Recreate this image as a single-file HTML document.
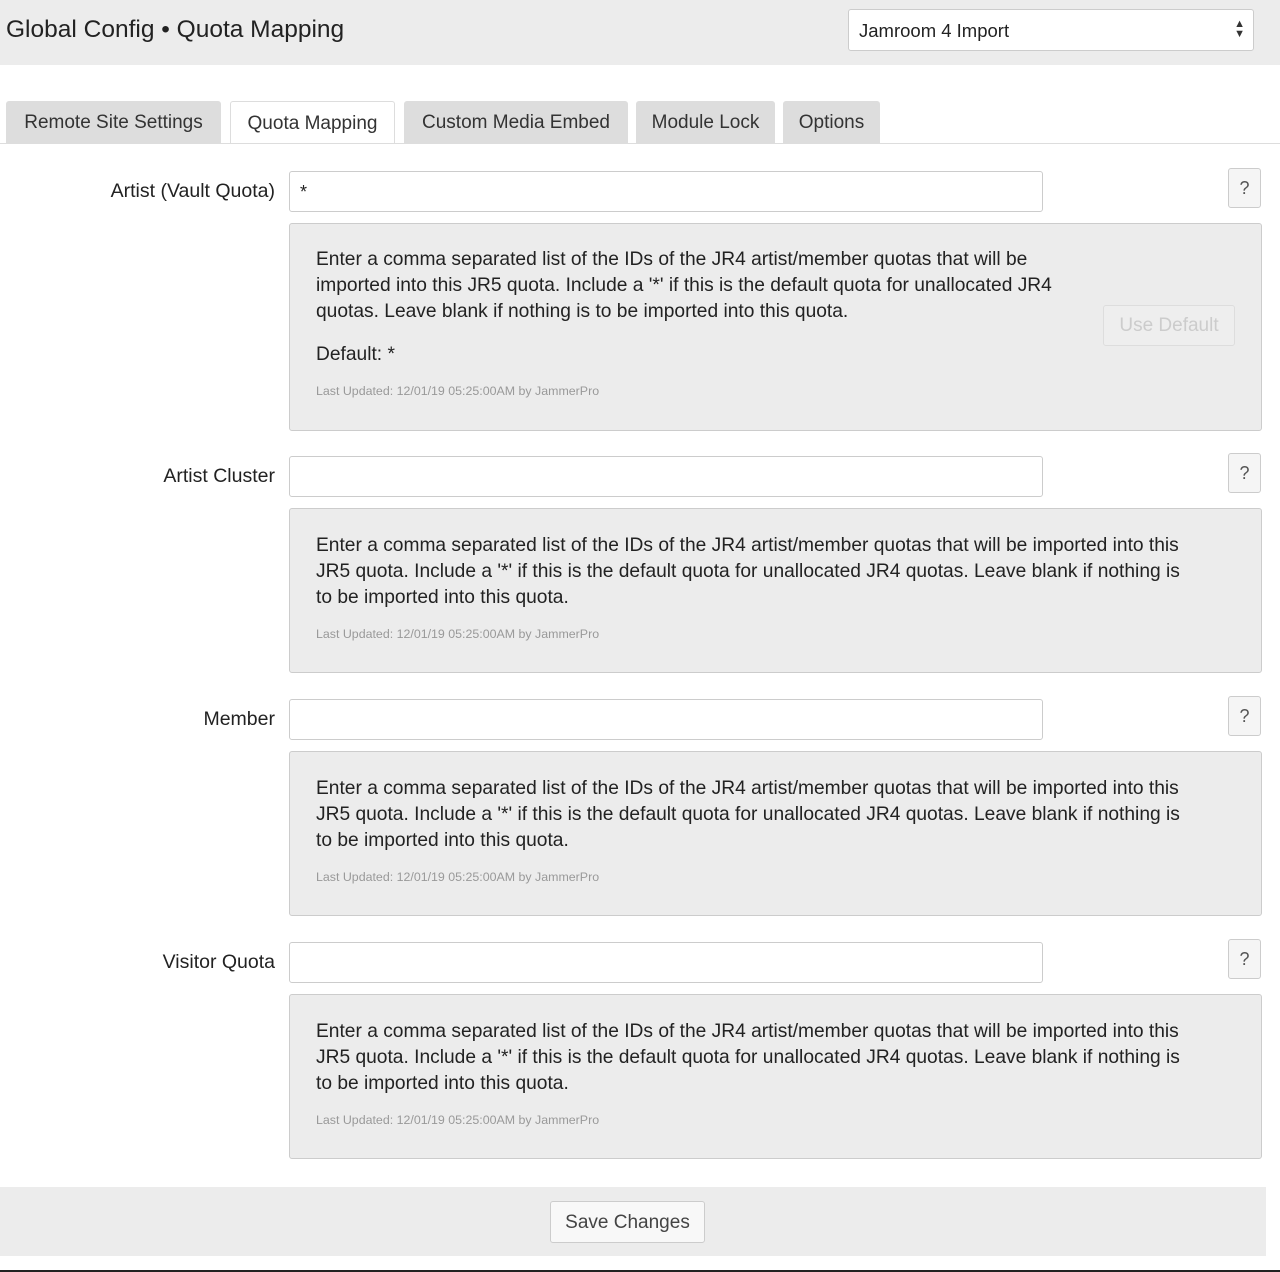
<!DOCTYPE html>
<html><head><meta charset="utf-8"><style>
*{box-sizing:border-box;margin:0;padding:0}
body{width:1280px;height:1272px;background:#fff;font-family:"Liberation Sans",sans-serif;color:#222;position:relative;overflow:hidden}
.abs{position:absolute}
.hdr{left:0;top:0;width:1280px;height:65px;background:#ececec}
.title{left:6px;top:16px;font-size:24.5px;color:#222}
.sel{left:848px;top:9px;width:406px;height:42px;background:#fff;border:1px solid #ccc;border-radius:3px;font-size:18.5px;padding:10px 0 0 10px}
.tab{top:101px;height:42px;background:#ddd;border-radius:3px 3px 0 0;font-size:19px;text-align:center;padding-top:11px;color:#333;white-space:nowrap}
.tab.on{background:#fff;border:1px solid #ddd;border-bottom:none;height:43px}
.line{left:0;top:143px;width:1280px;height:1px;background:#ddd}
.lbl{width:275px;left:0;text-align:right;font-size:19.5px;color:#222}
.inp{left:289px;width:754px;height:41px;background:#fff;border:1px solid #ccc;border-radius:3px;font-size:18px;padding:10px 0 0 10px}
.q{left:1228px;width:33px;height:40px;background:#f5f5f5;border:1px solid #ccc;border-radius:3px;font-size:18px;text-align:center;padding-top:9px;color:#555}
.box{left:289px;width:973px;background:#ececec;border:1px solid #ccc;border-radius:3px}
.txt{position:absolute;left:26px;font-size:19.2px;line-height:26px;white-space:nowrap;color:#222}
.lu{position:absolute;left:26px;font-size:12.4px;color:#999;white-space:nowrap}
.ud{left:1103px;top:305px;width:132px;height:41px;border:1px solid #ddd;border-radius:3px;background:#eee;color:#ccc;font-size:19px;text-align:center;padding-top:9px}
.foot{left:0;top:1187px;width:1266px;height:69px;background:#ececec}
.save{left:550px;top:1201px;width:155px;height:42px;border:1px solid #ccc;border-radius:3px;background:#f8f8f8;font-size:19px;text-align:center;padding-top:10px;color:#444}
.bar{left:0;top:1270px;width:1280px;height:2px;background:#222}
</style></head><body>
<div class="abs hdr"></div>
<div class="abs title">Global Config • Quota Mapping</div>
<div class="abs sel">Jamroom 4 Import<span style="position:absolute;right:8px;top:9px;font-size:11px;line-height:10px;color:#333">▲<br>▼</span></div>
<div class="abs tab" style="left:6px;width:215px">Remote Site Settings</div>
<div class="abs tab on" style="left:230px;width:165px">Quota Mapping</div>
<div class="abs tab" style="left:404px;width:224px">Custom Media Embed</div>
<div class="abs tab" style="left:636px;width:139px">Module Lock</div>
<div class="abs tab" style="left:783px;width:97px">Options</div>
<div class="abs line"></div>

<div class="abs lbl" style="top:180px">Artist (Vault Quota)</div>
<div class="abs inp" style="top:171px">*</div>
<div class="abs q" style="top:168px">?</div>
<div class="abs box" style="top:223px;height:208px">
<div class="txt" style="top:23px">Enter a comma separated list of the IDs of the JR4 artist/member quotas that will be<br>imported into this JR5 quota. Include a '*' if this is the default quota for unallocated JR4<br>quotas. Leave blank if nothing is to be imported into this quota.</div>
<div class="txt" style="top:118px">Default: *</div>
<div class="lu" style="top:160px">Last Updated: 12/01/19 05:25:00AM by JammerPro</div>
</div>
<div class="abs ud">Use Default</div>

<div class="abs lbl" style="top:465px">Artist Cluster</div>
<div class="abs inp" style="top:456px"></div>
<div class="abs q" style="top:453px">?</div>
<div class="abs box" style="top:508px;height:165px">
<div class="txt" style="top:24px">Enter a comma separated list of the IDs of the JR4 artist/member quotas that will be imported into this<br>JR5 quota. Include a '*' if this is the default quota for unallocated JR4 quotas. Leave blank if nothing is<br>to be imported into this quota.</div>
<div class="lu" style="top:118px">Last Updated: 12/01/19 05:25:00AM by JammerPro</div>
</div>

<div class="abs lbl" style="top:708px">Member</div>
<div class="abs inp" style="top:699px"></div>
<div class="abs q" style="top:696px">?</div>
<div class="abs box" style="top:751px;height:165px">
<div class="txt" style="top:24px">Enter a comma separated list of the IDs of the JR4 artist/member quotas that will be imported into this<br>JR5 quota. Include a '*' if this is the default quota for unallocated JR4 quotas. Leave blank if nothing is<br>to be imported into this quota.</div>
<div class="lu" style="top:118px">Last Updated: 12/01/19 05:25:00AM by JammerPro</div>
</div>

<div class="abs lbl" style="top:951px">Visitor Quota</div>
<div class="abs inp" style="top:942px"></div>
<div class="abs q" style="top:939px">?</div>
<div class="abs box" style="top:994px;height:165px">
<div class="txt" style="top:24px">Enter a comma separated list of the IDs of the JR4 artist/member quotas that will be imported into this<br>JR5 quota. Include a '*' if this is the default quota for unallocated JR4 quotas. Leave blank if nothing is<br>to be imported into this quota.</div>
<div class="lu" style="top:118px">Last Updated: 12/01/19 05:25:00AM by JammerPro</div>
</div>

<div class="abs foot"></div>
<div class="abs save">Save Changes</div>
<div class="abs bar"></div>
</body></html>
